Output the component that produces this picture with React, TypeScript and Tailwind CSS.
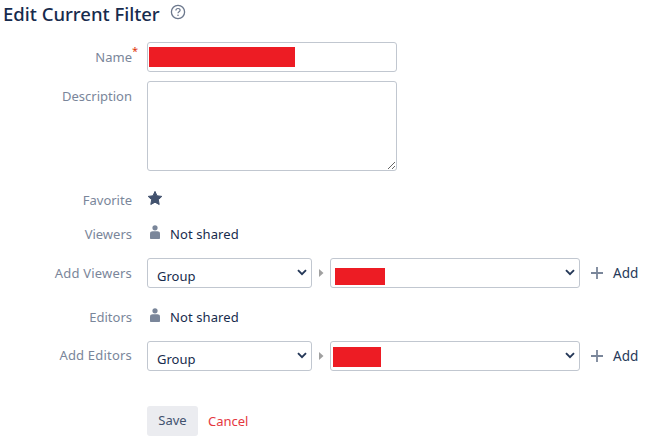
import React from "react";

const font = { fontFamily: '"Noto Sans", sans-serif' };

function Label({ children, className = "" }: { children: React.ReactNode; className?: string }) {
  return <div className={`w-[132px] shrink-0 text-right text-[13px] leading-[18px] text-[#7a869a] ${className}`}>{children}</div>;
}

function Person() {
  return (
    <svg width="10" height="15" viewBox="0 0 10 15" className="block shrink-0">
      <circle cx="5" cy="2.8" r="2.6" fill="#7a869a" />
      <path d="M0 8.5C0 7 1.2 6.2 2.6 6.2h4.800C8.800 6.200 10 7 10 8.500V13c0 .6-.4 1-1 1H1c-.6 0-1-.4-1-1z" fill="#7a869a" />
    </svg>
  );
}

function Arrow() {
  return (
    <svg width="6" height="10" viewBox="0 0 6 10" className="shrink-0">
      <path d="M1 1l4.500 4-4.500 4z" fill="#a0a0a0" />
    </svg>
  );
}

function Chevron() {
  return (
    <svg width="10" height="7" viewBox="0 0 10 7" className="pointer-events-none absolute right-[4px] top-[10px]">
      <path d="M1 1.200l4 4 4-4" fill="none" stroke="#253858" strokeWidth="1.900" />
    </svg>
  );
}

function Picker({ redClass }: { redClass: string }) {
  return (
    <div className="flex items-center">
      <div className="relative h-[30px] w-[165px] rounded-[3px] border border-[#c1c7d0] bg-white pl-[9px] pt-[8px] text-[13px] leading-[18px] text-[#172b4d]">
        Group
        <Chevron />
      </div>
      <div className="flex w-[18px] justify-center"><Arrow /></div>
      <div className="relative h-[30px] w-[250px] rounded-[3px] border border-[#c1c7d0] bg-white">
        <div className={`absolute bg-[#ed1c24] ${redClass}`} />
        <Chevron />
      </div>
      <div className="ml-[11px] flex items-center gap-[10px] text-[13.5px] text-[#253858]">
        <svg width="12" height="12" viewBox="0 0 12 12">
          <path d="M6 0v12M0 6h12" stroke="#7a869a" strokeWidth="1.800" />
        </svg>
        Add
      </div>
    </div>
  );
}

export default function App() {
  return (
    <div className="h-[446px] w-[647px] overflow-hidden bg-white" style={font}>
      <div className="flex items-center pl-[3px] pt-[1px]">
        <h1 className="text-[18.5px] font-medium leading-[26px] text-[#172b4d]">Edit Current Filter</h1>
        <svg width="16" height="16" viewBox="0 0 16 16" className="ml-[10px] -mt-[4px]">
          <circle cx="8" cy="8" r="6.600" fill="none" stroke="#6b778c" strokeWidth="1.300" />
          <path d="M5.900 6.400c0-1.200.9-1.900 2.100-1.900s2.100.7 2.100 1.800c0 1.500-2.100 1.500-2.100 3" fill="none" stroke="#6b778c" strokeWidth="1.200" />
          <circle cx="8" cy="11.200" r=".8" fill="#6b778c" />
        </svg>
      </div>

      <div className="mt-[15px] flex gap-[15px]">
        <Label className="pt-[6px]">
          <span className="relative">
            Name
            <span className="absolute -right-[6px] -top-[3px] text-[11px] leading-none text-[#de350b]">*</span>
          </span>
        </Label>
        <div className="relative h-[30px] w-[250px] rounded-[3px] border border-[#c1c7d0]">
          <div className="absolute left-[1px] top-[4px] h-[20px] w-[146px] bg-[#ed1c24]" />
        </div>
      </div>

      <div className="mt-[9px] flex gap-[15px]">
        <Label className="pt-[6px]">Description</Label>
        <textarea className="h-[90px] w-[250px] rounded-[3px] border border-[#c1c7d0] outline-none" />
      </div>

      <div className="mt-[19px] flex h-[20px] items-center gap-[15px]">
        <Label>Favorite</Label>
        <svg width="16" height="16" viewBox="0 0 16 16" className="-mt-[4px]">
          <path d="M8 1.400l2 4.400 4.800.6-3.500 3.300.9 4.800L8 12.200l-4.200 2.300.9-4.800L1.200 6.400l4.800-.6z" fill="#42526e" stroke="#42526e" strokeWidth="1" strokeLinejoin="round" />
        </svg>
      </div>

      <div className="mt-[14px] flex h-[20px] items-center gap-[15px]">
        <Label>Viewers</Label>
        <div className="ml-[3px] flex items-center gap-[10px] text-[13px] text-[#172b4d]">
          <span className="-mt-[3px]"><Person /></span>
          <span className="mt-[1px] tracking-[0.1px]">Not shared</span>
        </div>
      </div>

      <div className="mt-[14px] flex gap-[15px]">
        <Label className="pt-[6px] tracking-[0.2px]">Add Viewers</Label>
        <Picker redClass="left-[4px] top-[9px] h-[17px] w-[50px]" />
      </div>

      <div className="mt-[19px] flex h-[20px] items-center gap-[15px]">
        <Label>Editors</Label>
        <div className="ml-[3px] flex items-center gap-[10px] text-[13px] text-[#172b4d]">
          <span className="-mt-[3px]"><Person /></span>
          <span className="mt-[1px] tracking-[0.1px]">Not shared</span>
        </div>
      </div>

      <div className="mt-[14px] flex gap-[15px]">
        <Label className="pt-[5px] tracking-[0.2px]">Add Editors</Label>
        <Picker redClass="left-[2px] top-[5px] h-[20px] w-[48px]" />
      </div>

      <div className="ml-[147px] mt-[35px] flex items-center gap-[10px]">
        <button className="h-[30px] w-[51px] rounded-[3px] bg-[#ebecf0] text-[13px] text-[#42526e]">Save</button>
        <span className="mt-[1px] text-[13px] text-[#e5383f]">Cancel</span>
      </div>
    </div>
  );
}
